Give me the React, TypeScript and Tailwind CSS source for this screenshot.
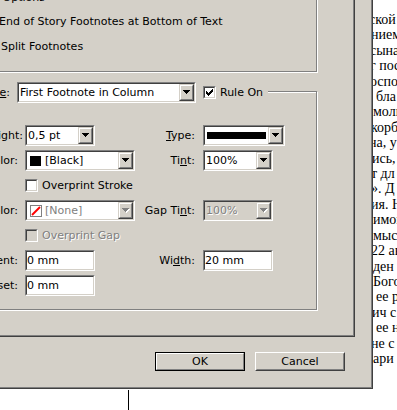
import React from "react";

const TRI = "M0 0H7V1H6V2H5V3H4V4H3V3H2V2H1V1H0Z";
const TICK =
  "M6 0h1v1h-1z M5 1h2v1h-2z M0 2h1v1h-1z M4 2h3v1h-3z M0 3h2v1h-2z M3 3h3v1h-3z M0 4h5v1h-5z M1 5h3v1h-3z M2 6h1v1h-1z";

// page text peeking out from behind the dialog: [text, left offset]
const pageLines: [string, string][] = [
  ["ской", "-ml-[4px]"],
  ["нием", "-ml-[2px]"],
  ["сына", "-ml-[3px]"],
  ["г пос", "-ml-[3px]"],
  ["оспо", "-ml-[3px]"],
  ["бла", "ml-[3px]"],
  ["моли", "ml-[0px]"],
  ["корб", "-ml-[2px]"],
  ["на, у", "-ml-[4px]"],
  ["ись, п", "-ml-[1px]"],
  ["т дл", "-ml-[2px]"],
  ["». Д", "-ml-[2px]"],
  ["ия. Н", "-ml-[2px]"],
  ["имой", "ml-[0px]"],
  ["мыс", "ml-[0px]"],
  ["22 ав", "-ml-[2px]"],
  ["ден", "ml-[0px]"],
  ["Бого", "ml-[0px]"],
  ["ее р", "ml-[3px]"],
  ["ич с", "-ml-[1px]"],
  ["ее н", "ml-[3px]"],
  ["не с", "-ml-[2px]"],
  ["ари", "ml-[0px]"],
];

function Sunken({
  className = "",
  inner = "",
  children,
}: {
  className?: string;
  inner?: string;
  children?: React.ReactNode;
}) {
  return (
    <div
      className={`shrink-0 border border-t-[#808080] border-l-[#808080] border-r-white border-b-white ${className}`}
    >
      <div
        className={`flex h-full border border-t-[#404040] border-l-[#404040] border-r-[#d4d0c8] border-b-[#d4d0c8] ${inner}`}
      >
        {children}
      </div>
    </div>
  );
}

function DropButton({ disabled }: { disabled?: boolean }) {
  return (
    <div className="h-full w-[15px] shrink-0 border border-t-[#d4d0c8] border-l-[#d4d0c8] border-r-[#404040] border-b-[#404040]">
      <div className="flex h-full items-center justify-center border border-t-white border-l-white border-r-[#808080] border-b-[#808080] bg-[#d4d0c8]">
        <svg width="8" height="5" shapeRendering="crispEdges">
          {disabled && <path d={TRI} fill="#fff" transform="translate(1 1)" />}
          <path d={TRI} fill={disabled ? "#808080" : "#000"} />
        </svg>
      </div>
    </div>
  );
}

function Combo({
  className,
  disabled,
  grayField,
  children,
}: {
  className: string;
  disabled?: boolean;
  grayField?: boolean;
  children?: React.ReactNode;
}) {
  return (
    <Sunken className={`h-[21px] ${className}`}>
      <div
        className={`flex min-w-0 flex-1 items-center overflow-hidden whitespace-nowrap pl-[1px] ${
          grayField ? "bg-[#d4d0c8]" : "bg-white"
        }`}
      >
        {children}
      </div>
      <DropButton disabled={disabled} />
    </Sunken>
  );
}

function Field({ className, value }: { className: string; value: string }) {
  return (
    <Sunken className={`h-[21px] ${className}`} inner="items-center bg-white">
      <span className="whitespace-nowrap">{value}</span>
    </Sunken>
  );
}

function Check({ checked, disabled }: { checked?: boolean; disabled?: boolean }) {
  return (
    <Sunken
      className="h-[13px] w-[13px]"
      inner={`items-center justify-center ${disabled ? "bg-[#d4d0c8]" : "bg-white"}`}
    >
      {checked && (
        <svg width="7" height="7" shapeRendering="crispEdges">
          <path d={TICK} fill="#000" />
        </svg>
      )}
    </Sunken>
  );
}

function Acc({ text, at }: { text: string; at: number }) {
  return (
    <span className="whitespace-nowrap">
      {text.slice(0, at)}
      <span className="underline underline-offset-[1px]">{text[at]}</span>
      {text.slice(at + 1)}
    </span>
  );
}

const dim = "text-[#808080] [text-shadow:1px_1px_0_#fff]";

export default function App() {
  return (
    <div className="flex h-[410px] w-[397px] overflow-hidden bg-white">
      <div className="flex w-[373px] shrink-0 flex-col">
        {/* Footnote Options dialog, cropped on the left and top */}
        <div className="-mt-[40px] -ml-[90px] h-[429px] w-[463px] shrink-0 border-r border-b border-[#404040] bg-[#d4d0c8] font-['DejaVu_Sans',sans-serif] text-[11px] leading-[13px] text-black">
          <div className="flex h-full flex-col border-r border-b border-[#808080]">
            <div className="mt-[8px] mr-[16px] ml-[8px] h-[369px] border-r border-b border-[#404040]">
              <div className="h-full border-r border-b border-[#808080] pt-[28px] pl-[10px]">
                {/* Placement Options */}
                <div className="h-[76px] w-[389px] border border-[#808080] shadow-[1px_1px_0_#fff,inset_1px_1px_0_#fff]">
                  <div className="-mt-[6px] flex h-[13px] w-[118px] justify-end">
                    <span className="whitespace-nowrap bg-[#d4d0c8] px-[2px]">Placement Options</span>
                  </div>
                  <div className="mt-[11px] flex h-[13px] items-center">
                    <div className="flex w-[67px] shrink-0 items-center justify-end gap-[5px]">
                      <Check />
                      <span>Place</span>
                    </div>
                    <span className="ml-[3px] whitespace-nowrap">End of Story Footnotes at Bottom of Text</span>
                  </div>
                  <div className="mt-[12px] flex h-[13px] items-center">
                    <div className="flex w-[68px] shrink-0 items-center justify-end gap-[5px]">
                      <Check checked />
                      <span>Allow</span>
                    </div>
                    <span className="ml-[4px] whitespace-nowrap">Split Footnotes</span>
                  </div>
                </div>

                {/* Rule Above */}
                <div className="mt-[19px] h-[219px] w-[389px] border border-[#808080] shadow-[1px_1px_0_#fff,inset_1px_1px_0_#fff]">
                  <div className="-mt-[10px] flex h-[21px] w-[339px] items-center bg-[#d4d0c8]">
                    <div className="flex w-[81px] shrink-0 justify-end">
                      <Acc text="Rule Above:" at={9} />
                    </div>
                    <Combo className="ml-[7px] w-[179px]">First Footnote in Column</Combo>
                    <div className="ml-[7px]">
                      <Check checked />
                    </div>
                    <span className="ml-[4px] whitespace-nowrap">Rule On</span>
                  </div>

                  <div className="mt-[22px] flex h-[21px] items-center">
                    <div className="flex w-[206px] shrink-0 items-center">
                      <div className="flex w-[94px] shrink-0 justify-end">Weight:</div>
                      <Combo className="ml-[2px] w-[70px]">0,5 pt</Combo>
                    </div>
                    <div className="flex w-[60px] shrink-0 justify-end">
                      <Acc text="Type:" at={0} />
                    </div>
                    <Combo className="ml-[8px] w-[82px]">
                      <div className="mr-[2px] ml-[1px] h-[7px] flex-1 bg-black" />
                    </Combo>
                  </div>

                  <div className="mt-[4px] flex h-[21px] items-center">
                    <div className="flex w-[206px] shrink-0 items-center">
                      <div className="flex w-[89px] shrink-0 justify-end">Color:</div>
                      <Combo className="ml-[7px] w-[110px]">
                        <div className="ml-[2px] h-[10px] w-[11px] shrink-0 bg-black" />
                        <span className="ml-[4px]">[Black]</span>
                      </Combo>
                    </div>
                    <div className="flex w-[60px] shrink-0 justify-end">
                      <Acc text="Tint:" at={2} />
                    </div>
                    <Combo className="ml-[8px] w-[70px]">100%</Combo>
                  </div>

                  <div className="mt-[8px] flex h-[13px] items-center pl-[96px]">
                    <Check />
                    <span className="ml-[4px] whitespace-nowrap">Overprint Stroke</span>
                  </div>

                  <div className="mt-[8px] flex h-[21px] items-center">
                    <div className="flex w-[206px] shrink-0 items-center">
                      <div className="flex w-[89px] shrink-0 justify-end whitespace-nowrap">Gap Color:</div>
                      <Combo className="ml-[7px] w-[110px]" disabled>
                        <svg width="12" height="12" className="ml-[2px] shrink-0" shapeRendering="crispEdges">
                          <rect x="0.5" y="0.5" width="11" height="11" fill="#fff" stroke="#808080" />
                          <path d="M2 10L10 2" stroke="#ff0000" strokeWidth="2" shapeRendering="auto" />
                        </svg>
                        <span className={`ml-[3px] ${dim}`}>[None]</span>
                      </Combo>
                    </div>
                    <div className="flex w-[60px] shrink-0 justify-end whitespace-nowrap">
                      <Acc text="Gap Tint:" at={6} />
                    </div>
                    <Combo className="ml-[8px] w-[70px]" disabled grayField>
                      <span className={dim}>100%</span>
                    </Combo>
                  </div>

                  <div className="mt-[8px] flex h-[13px] items-center pl-[96px]">
                    <Check disabled />
                    <span className={`ml-[4px] whitespace-nowrap ${dim}`}>Overprint Gap</span>
                  </div>

                  <div className="mt-[8px] flex h-[21px] items-center">
                    <div className="flex w-[206px] shrink-0 items-center">
                      <div className="flex w-[89px] shrink-0 justify-end whitespace-nowrap">Left Indent:</div>
                      <Field className="ml-[7px] w-[70px]" value="0 mm" />
                    </div>
                    <div className="flex w-[60px] shrink-0 justify-end">
                      <Acc text="Width:" at={2} />
                    </div>
                    <Field className="ml-[8px] w-[70px]" value="20 mm" />
                  </div>

                  <div className="mt-[4px] flex h-[21px] items-center">
                    <div className="flex w-[89px] shrink-0 justify-end">Offset:</div>
                    <Field className="ml-[7px] w-[70px]" value="0 mm" />
                  </div>
                </div>
              </div>
            </div>

            <div className="mt-[15px] flex justify-end gap-[10px] pr-[26px]">
              <div className="h-[19px] w-[90px] border border-black">
                <div className="flex h-full items-center justify-center border border-t-white border-l-white border-r-[#808080] border-b-[#808080]">
                  OK
                </div>
              </div>
              <div className="h-[19px] w-[90px] border border-t-white border-l-white border-r-[#404040] border-b-[#404040]">
                <div className="flex h-full items-center justify-center border border-t-[#d4d0c8] border-l-[#d4d0c8] border-r-[#808080] border-b-[#808080]">
                  Cancel
                </div>
              </div>
            </div>
          </div>
        </div>
        {/* text frame edge below the dialog */}
        <div className="mt-[1px] ml-[128px] flex-1 border-l border-black" />
      </div>

      <div className="w-[24px] shrink-0 overflow-hidden bg-white pt-[12px] font-['Liberation_Serif',serif] text-[14px] leading-[15.4px] text-black">
        {pageLines.map(([t, off], i) => (
          <div key={i} className={`whitespace-nowrap ${off}`}>
            {t}
          </div>
        ))}
      </div>
    </div>
  );
}
